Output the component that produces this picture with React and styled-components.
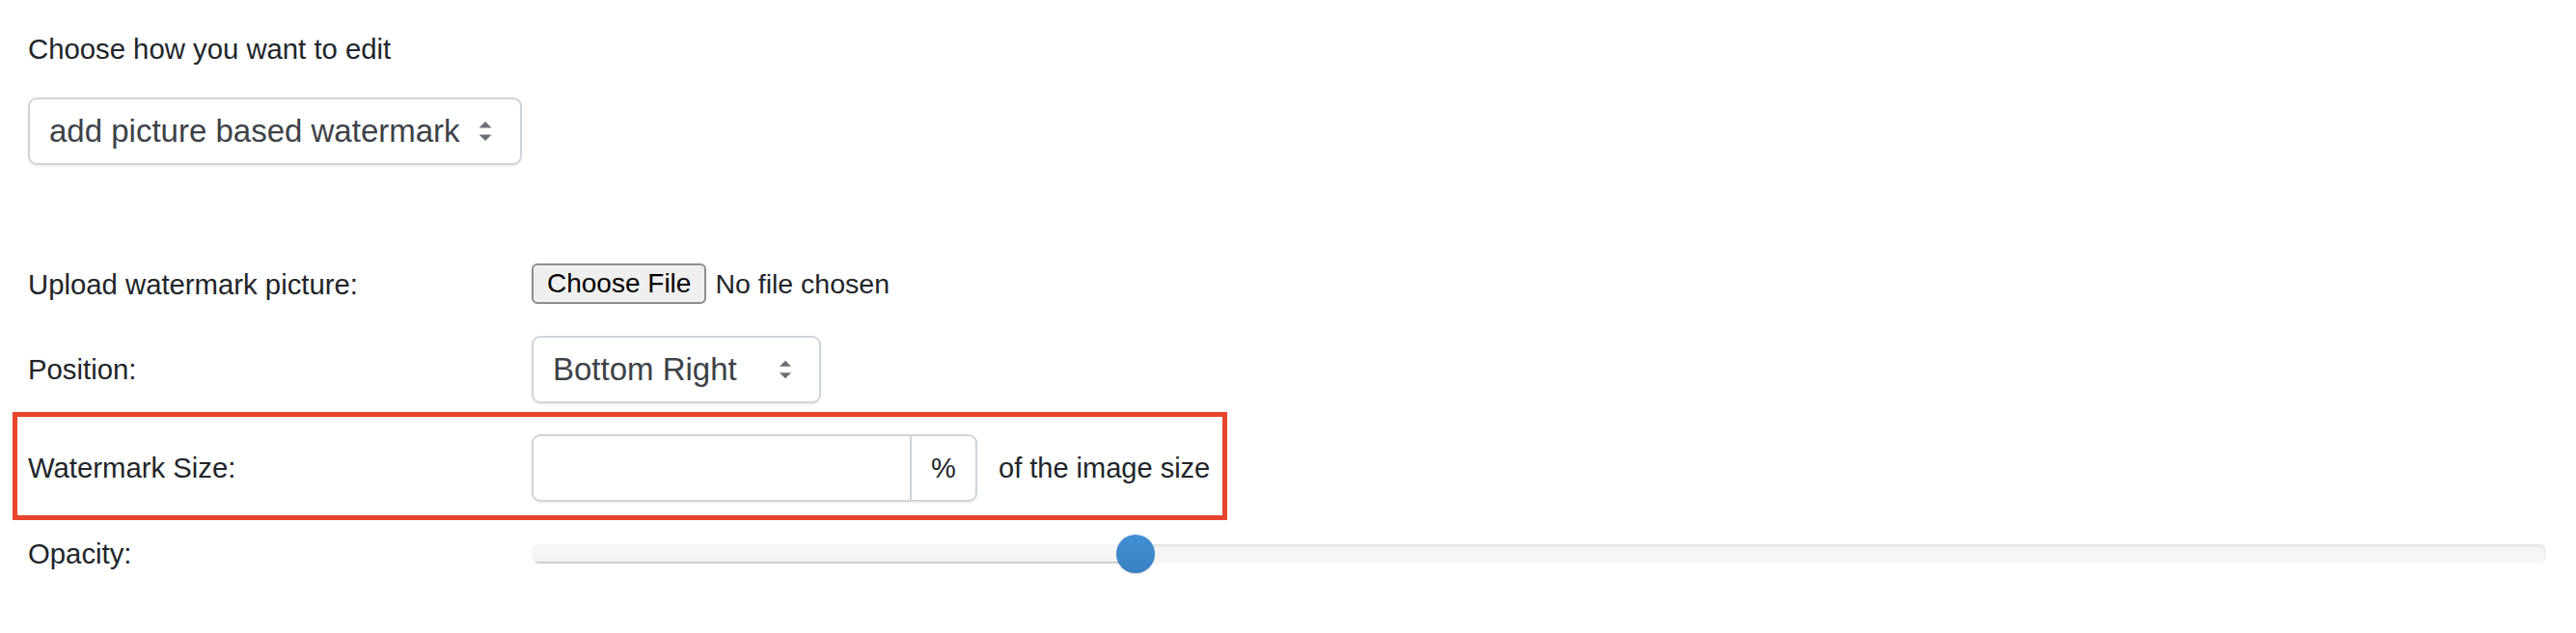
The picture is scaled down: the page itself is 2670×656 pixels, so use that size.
import React from 'react'
import styled, { createGlobalStyle } from 'styled-components'

const GlobalStyle = createGlobalStyle`
  body {
    margin: 0;
    background: #fff;
    color: #212529;
    font-family: 'Liberation Sans', Arial, sans-serif;
  }
`

const Page = styled.div`
  padding: 29px 31px 0 29px;
`

const Label = styled.div`
  font-size: 29.3px;
  line-height: 43.5px;
  color: #212529;
`

const IntroLabel = styled(Label)`
  margin-bottom: 28px;
`

const SelectBox = styled.div`
  box-sizing: border-box;
  display: flex;
  align-items: center;
  justify-content: space-between;
  width: ${props => props.width}px;
  height: 70px;
  padding: 0 28px 0 20px;
  border: 2px solid #ced4da;
  border-radius: 9px;
  box-shadow: 0 2px 2px rgba(0, 0, 0, 0.05);
  background: #fff;
  color: #3d4247;
  font-size: 33px;
`

const Form = styled.div`
  display: grid;
  grid-template-columns: 522px 1fr;
  row-gap: 32px;
  align-items: center;
  margin-top: 102px;
`

const Field = styled.div`
  position: relative;
  display: flex;
  align-items: center;
`

const FileButton = styled.div`
  box-sizing: border-box;
  height: 42px;
  padding: 0 14px;
  display: flex;
  align-items: center;
  border: 2px solid #8d8d8d;
  border-radius: 6px;
  background: #efefef;
  color: #000;
  font-size: 28px;
`

const FileName = styled.span`
  margin-left: 9px;
  font-size: 28.5px;
  color: #212529;
`

const InputGroup = styled.div`
  display: flex;
  height: 70px;
  border: 2px solid #ced4da;
  border-radius: 9px;
  box-sizing: border-box;
  box-shadow: 0 2px 2px rgba(0, 0, 0, 0.05);
`

const TextInput = styled.div`
  width: 390px;
`

const Addon = styled.div`
  width: 66px;
  border-left: 2px solid #ced4da;
  display: flex;
  align-items: center;
  justify-content: center;
  font-size: 29px;
  color: #212529;
`

const Suffix = styled.span`
  margin-left: 22px;
  font-size: 29px;
`

const Highlight = styled.div`
  position: absolute;
  top: -23px;
  bottom: -19px;
  left: -538px;
  width: 1259px;
  border: 5px solid #e8432b;
  box-sizing: border-box;
  pointer-events: none;
`

const Slider = styled.div`
  position: relative;
  flex: 1;
  height: 40px;
  display: flex;
  align-items: center;
`

const Track = styled.div`
  position: relative;
  width: 100%;
  height: 20px;
  border-radius: 8px;
  background: linear-gradient(#f3f3f3, #f8f8f8);
  box-shadow: inset 0 2px 3px rgba(0, 0, 0, 0.08);
  overflow: hidden;
`

const Selection = styled.div`
  height: 100%;
  background: linear-gradient(#f7f7f7, #f3f3f3);
  box-shadow: inset 0 -2px 0 rgba(0, 0, 0, 0.15);
`

const Thumb = styled.div`
  position: absolute;
  top: 0;
  width: 40px;
  height: 40px;
  margin-left: -20px;
  border-radius: 50%;
  background: linear-gradient(#428fd3, #3a80c4);
  box-shadow: 0 1px 2px rgba(0, 0, 0, 0.15);
`

const Arrows = ({ size }) => (
  <svg width={size} height={20} viewBox='0 0 15 20' fill='#6c6f75'>
    <polygon points='7.5,0 1,6.5 14,6.5' />
    <polygon points='1,13.5 14,13.5 7.5,20' />
  </svg>
)

const App = () => {
  const opacity = 30

  return (
    <Page>
      <GlobalStyle />
      <IntroLabel>Choose how you want to edit</IntroLabel>
      <SelectBox width={512}>
        <span>add picture based watermark</span>
        <Arrows size={16} />
      </SelectBox>

      <Form>
        <Label>Upload watermark picture:</Label>
        <Field>
          <FileButton>Choose File</FileButton>
          <FileName>No file chosen</FileName>
        </Field>

        <Label>Position:</Label>
        <Field>
          <SelectBox width={300}>
            <span>Bottom Right</span>
            <Arrows size={14} />
          </SelectBox>
        </Field>

        <Label>Watermark Size:</Label>
        <Field>
          <InputGroup>
            <TextInput />
            <Addon>%</Addon>
          </InputGroup>
          <Suffix>of the image size</Suffix>
          <Highlight />
        </Field>

        <Label>Opacity:</Label>
        <Field>
          <Slider>
            <Track>
              <Selection style={{ width: `${opacity}%` }} />
            </Track>
            <Thumb style={{ left: `${opacity}%` }} />
          </Slider>
        </Field>
      </Form>
    </Page>
  )
}

export default App
